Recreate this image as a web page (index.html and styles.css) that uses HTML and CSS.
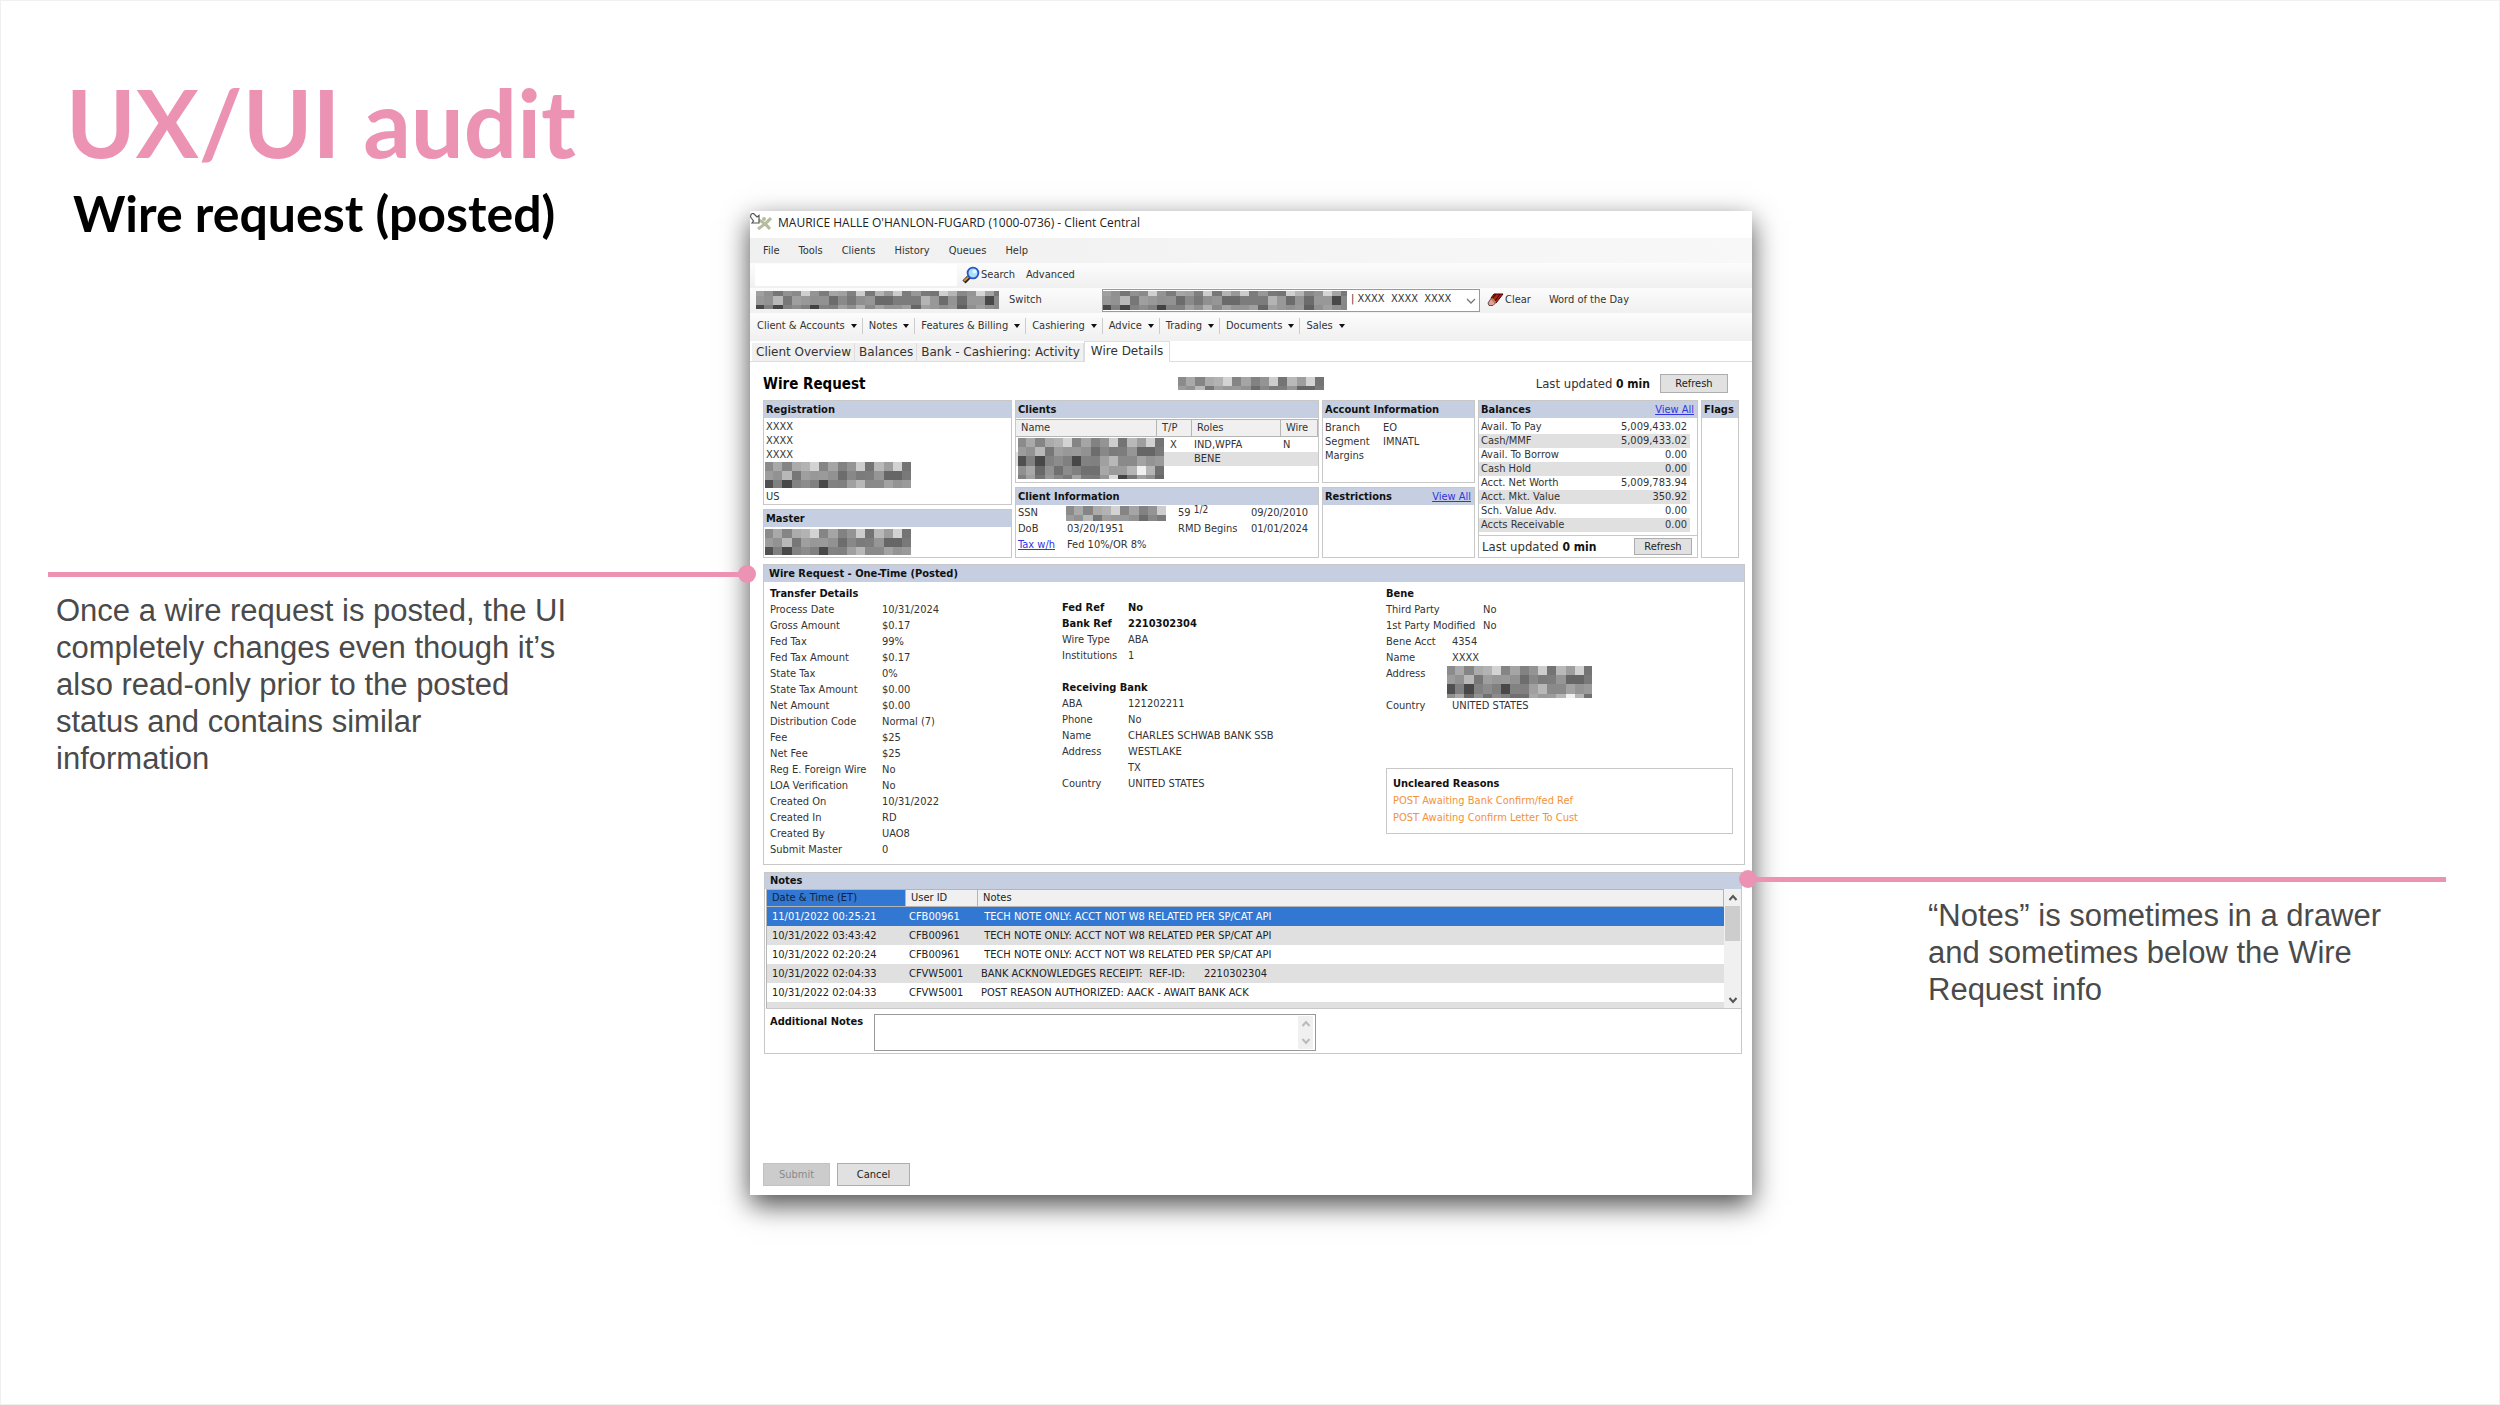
FILE: index.html
```html
<!DOCTYPE html>
<html lang="en">
<head>
<meta charset="utf-8">
<title>UX/UI audit - Wire request (posted)</title>
<link rel="stylesheet" href="styles.css">
</head>
<body>
<main class="slide">
  <section class="side side-left">
    <h1 class="title">UX/UI audit</h1>
    <h2 class="subtitle">Wire request (posted)</h2>
    <div class="callout callout-left">
      <p class="callout-text">Once a wire request is posted, the UI completely changes even though it’s also read-only prior to the posted status and contains similar information</p>
    </div>
  </section>

  <article class="window">
    <header class="titlebar">
      <svg class="app-icon" viewBox="0 0 23 20" width="23" height="20" aria-hidden="true">
        <path d="M21 5Q17 10 8 16M9 7Q15 10 20 16" fill="none" stroke="#b3bd9d" stroke-width="3"/>
        <circle cx="14" cy="6" r="2" fill="#b3bd9d"/>
        <path d="M1 1.500L3 0l4 4 2-1.500V10H2l1.500-2-3-4z" fill="#fff" stroke="#555" stroke-width="1.200"/>
      </svg>
      <span>MAURICE HALLE O'HANLON-FUGARD (1000-0736) - Client Central</span>
    </header>
    <nav class="menu">
      <a href="#">File</a><a href="#">Tools</a><a href="#">Clients</a><a href="#">History</a><a href="#">Queues</a><a href="#">Help</a>
    </nav>
    <div class="bar search-bar">
      <input class="search-input" type="text" aria-label="Search">
      <button class="flat">
        <svg width="18" height="18" viewBox="0 0 18 18" aria-hidden="true">
          <path d="M2 16l5-5" stroke="#222" stroke-width="4.4"/><path d="M2 15l5-4.500" stroke="#d98b3a" stroke-width="2.200"/>
          <circle cx="11" cy="7" r="5.400" fill="#a9e0fb" stroke="#2a52c9" stroke-width="1.800"/><circle cx="12.500" cy="5.500" r="2" fill="#e2f7ff"/>
        </svg>Search</button>
      <button class="flat">Advanced</button>
    </div>
    <div class="bar account-bar">
      <div class="mosaic mosaic-bar" data-rows="bar"></div>
      <button class="flat switch">Switch</button>
      <div class="combo">
        <select aria-label="Account"><option>| XXXX&nbsp; XXXX&nbsp; XXXX</option></select>
        <div class="mosaic combo-mosaic" data-rows="bar"></div>
        <svg class="combo-arrow" width="10" height="6" viewBox="0 0 10 6" aria-hidden="true"><path d="M1 1l4 4 4-4" fill="none" stroke="#777" stroke-width="1.300"/></svg>
      </div>
      <button class="flat clear">
        <svg width="17" height="14" viewBox="0 0 17 14" aria-hidden="true">
          <path d="M7 1h9L9 10 4 5z" fill="#b3201c" stroke="#400" /><path d="M9 1L5 6M13 1L8 8" stroke="#300"/>
          <path d="M5 5l4 4-1 1-4-4z" fill="#f2dc3c"/><path d="M4 5.500l4.500 4.500L6 12.500H2L1 10z" fill="#ef9c94" stroke="#333" stroke-width=".8"/>
        </svg>Clear</button>
      <button class="flat">Word of the Day</button>
    </div>
    <nav class="bar tool-bar">
      <button class="drop">Client &amp; Accounts</button><button class="drop">Notes</button><button class="drop">Features &amp; Billing</button><button class="drop">Cashiering</button><button class="drop">Advice</button><button class="drop">Trading</button><button class="drop">Documents</button><button class="drop">Sales</button>
    </nav>
    <nav class="tabs">
      <a class="tab" href="#">Client Overview</a><a class="tab" href="#">Balances</a><a class="tab" href="#">Bank - Cashiering: Activity</a><a class="tab active" href="#">Wire Details</a>
    </nav>

    <div class="content">
      <div class="page-head">
        <h3 class="page-title">Wire Request</h3>
        <div class="mosaic mosaic-head" data-rows="0,1"></div>
        <span class="updated">Last updated <b>0 min</b></span>
        <button class="btn refresh">Refresh</button>
      </div>

      <div class="summary">
        <div class="stack">
          <section class="panel registration">
            <h4 class="panel-head">Registration</h4>
            <div class="lines"><p>XXXX</p><p>XXXX</p><p>XXXX</p><div class="mosaic mosaic-three" data-rows="0,1,2"></div><p>US</p></div>
          </section>
          <section class="panel grow">
            <h4 class="panel-head">Master</h4>
            <div class="lines tight"><div class="mosaic mosaic-three" data-rows="0,1,2"></div></div>
          </section>
        </div>

        <div class="stack">
          <section class="panel upper">
            <h4 class="panel-head">Clients</h4>
            <div class="clients-wrap">
              <table class="clients">
                <colgroup><col class="c-name"><col class="c-tp"><col class="c-roles"><col></colgroup>
                <thead><tr><th>Name</th><th>T/P</th><th>Roles</th><th>Wire</th></tr></thead>
                <tbody>
                  <tr><td></td><td>X</td><td>IND,WPFA</td><td>N</td></tr>
                  <tr class="alt"><td></td><td></td><td>BENE</td><td></td></tr>
                </tbody>
              </table>
              <div class="mosaic clients-mosaic" data-rows="0,1,2,3,4"></div>
            </div>
          </section>
          <section class="panel grow">
            <h4 class="panel-head">Client Information</h4>
            <div class="info-grid">
              <span>SSN</span><div class="mosaic mosaic-ssn" data-rows="0,1"></div><span>59 <sup>1/2</sup></span><span>09/20/2010</span>
              <span>DoB</span><span>03/20/1951</span><span>RMD Begins</span><span>01/01/2024</span>
              <a class="link" href="#">Tax w/h</a><span>Fed 10%/OR 8%</span>
            </div>
          </section>
        </div>

        <div class="stack">
          <section class="panel upper">
            <h4 class="panel-head">Account Information</h4>
            <dl class="account-info"><dt>Branch</dt><dd>EO</dd><dt>Segment</dt><dd>IMNATL</dd><dt>Margins</dt><dd></dd></dl>
          </section>
          <section class="panel grow">
            <h4 class="panel-head">Restrictions <a class="link" href="#">View All</a></h4>
          </section>
        </div>

        <section class="panel">
          <h4 class="panel-head">Balances <a class="link" href="#">View All</a></h4>
          <table class="balances">
            <tr><th>Avail. To Pay</th><td>5,009,433.02</td></tr>
            <tr><th>Cash/MMF</th><td>5,009,433.02</td></tr>
            <tr><th>Avail. To Borrow</th><td>0.00</td></tr>
            <tr><th>Cash Hold</th><td>0.00</td></tr>
            <tr><th>Acct. Net Worth</th><td>5,009,783.94</td></tr>
            <tr><th>Acct. Mkt. Value</th><td>350.92</td></tr>
            <tr><th>Sch. Value Adv.</th><td>0.00</td></tr>
            <tr><th>Accts Receivable</th><td>0.00</td></tr>
          </table>
          <div class="balances-foot"><span class="updated">Last updated <b>0 min</b></span><button class="btn refresh-small">Refresh</button></div>
        </section>

        <section class="panel flags"><h4 class="panel-head">Flags</h4></section>
      </div>

      <section class="panel wire">
        <h4 class="panel-head">Wire Request - One-Time (Posted)</h4>
        <div class="wire-body">
          <div class="details">
            <h5>Transfer Details</h5>
            <dl>
              <dt>Process Date</dt><dd>10/31/2024</dd><dt>Gross Amount</dt><dd>$0.17</dd>
              <dt>Fed Tax</dt><dd>99%</dd><dt>Fed Tax Amount</dt><dd>$0.17</dd>
              <dt>State Tax</dt><dd>0%</dd><dt>State Tax Amount</dt><dd>$0.00</dd>
              <dt>Net Amount</dt><dd>$0.00</dd><dt>Distribution Code</dt><dd>Normal (7)</dd>
              <dt>Fee</dt><dd>$25</dd><dt>Net Fee</dt><dd>$25</dd>
              <dt>Reg E. Foreign Wire</dt><dd>No</dd><dt>LOA Verification</dt><dd>No</dd>
              <dt>Created On</dt><dd>10/31/2022</dd><dt>Created In</dt><dd>RD</dd>
              <dt>Created By</dt><dd>UAO8</dd><dt>Submit Master</dt><dd>0</dd>
            </dl>
          </div>
          <div class="details bank">
            <dl>
              <dt class="strong">Fed Ref</dt><dd class="strong">No</dd><dt class="strong">Bank Ref</dt><dd class="strong">2210302304</dd>
              <dt>Wire Type</dt><dd>ABA</dd><dt>Institutions</dt><dd>1</dd>
            </dl>
            <h5 class="receiving">Receiving Bank</h5>
            <dl>
              <dt>ABA</dt><dd>121202211</dd><dt>Phone</dt><dd>No</dd><dt>Name</dt><dd>CHARLES SCHWAB BANK SSB</dd>
              <dt>Address</dt><dd>WESTLAKE</dd><dt></dt><dd>TX</dd><dt>Country</dt><dd>UNITED STATES</dd>
            </dl>
          </div>
          <div class="details bene">
            <h5>Bene</h5>
            <dl class="party"><dt>Third Party</dt><dd>No</dd><dt>1st Party Modified</dt><dd>No</dd></dl>
            <dl>
              <dt>Bene Acct</dt><dd>4354</dd><dt>Name</dt><dd>XXXX</dd>
              <dt class="address">Address</dt><dd class="address"><div class="mosaic mosaic-address" data-rows="0,1,2,3"></div></dd>
              <dt>Country</dt><dd>UNITED STATES</dd>
            </dl>
            <div class="uncleared"><h5>Uncleared Reasons</h5><p>POST Awaiting Bank Confirm/fed Ref</p><p>POST Awaiting Confirm Letter To Cust</p></div>
          </div>
        </div>
      </section>

      <section class="panel notes">
        <h4 class="panel-head">Notes</h4>
        <div class="notes-list">
          <div class="notes-view">
            <table class="notes-table">
              <colgroup><col class="n-date"><col class="n-user"><col></colgroup>
              <thead><tr><th class="sorted">Date &amp; Time (ET)</th><th>User ID</th><th>Notes</th></tr></thead>
              <tbody>
                <tr class="selected"><td>11/01/2022 00:25:21</td><td>CFB00961</td><td>&nbsp;TECH NOTE ONLY: ACCT NOT W8 RELATED PER SP/CAT API</td></tr>
                <tr class="alt"><td>10/31/2022 03:43:42</td><td>CFB00961</td><td>&nbsp;TECH NOTE ONLY: ACCT NOT W8 RELATED PER SP/CAT API</td></tr>
                <tr><td>10/31/2022 02:20:24</td><td>CFB00961</td><td>&nbsp;TECH NOTE ONLY: ACCT NOT W8 RELATED PER SP/CAT API</td></tr>
                <tr class="alt"><td>10/31/2022 02:04:33</td><td>CFVW5001</td><td>BANK ACKNOWLEDGES RECEIPT:&nbsp; REF-ID: &nbsp; &nbsp; &nbsp;2210302304</td></tr>
                <tr><td>10/31/2022 02:04:33</td><td>CFVW5001</td><td>POST REASON AUTHORIZED: AACK - AWAIT BANK ACK</td></tr>
                <tr class="alt next"><td colspan="3"></td></tr>
              </tbody>
            </table>
          </div>
          <div class="scroll">
            <svg class="chev" viewBox="0 0 10 10"><path d="M1.500 7L5 3l3.500 4"/></svg>
            <div class="thumb"></div>
            <svg class="chev chev-down" viewBox="0 0 10 10"><path d="M1.500 3L5 7l3.500-4"/></svg>
          </div>
        </div>
        <div class="additional">
          <label for="extra">Additional Notes</label>
          <div class="area">
            <textarea id="extra"></textarea>
            <div class="area-scroll">
              <svg class="chev" viewBox="0 0 10 10"><path d="M1.500 7L5 3l3.500 4"/></svg>
              <svg class="chev" viewBox="0 0 10 10"><path d="M1.500 3L5 7l3.500-4"/></svg>
            </div>
          </div>
        </div>
      </section>

      <footer class="actions"><button class="btn submit" disabled>Submit</button><button class="btn cancel">Cancel</button></footer>
    </div>
  </article>

  <section class="side side-right">
    <div class="callout callout-right">
      <p class="callout-text">“Notes” is sometimes in a drawer and sometimes below the Wire Request info</p>
    </div>
  </section>
</main>
<script src="mosaic.js"></script>
</body>
</html>
```
FILE: styles.css
```css
* { box-sizing: border-box; }
body, h1, h2, h3, h4, h5, p, dl, dd { margin: 0; }
body {
  background: #fff;
  font-family: "DejaVu Sans Condensed", "DejaVu Sans", sans-serif;
  font-size: 11px;
  line-height: 16px;
  color: #333;
}
a { color: inherit; text-decoration: none; }
button, input, select, textarea { font: inherit; color: inherit; margin: 0; border-radius: 0; }
svg { display: block; flex: none; }
b, .strong { font-weight: bold; color: #111; }

/* Slide */
.slide {
  display: grid;
  grid-template-columns: 30% minmax(0, 40.08%) 1fr;
  align-items: start;
  min-height: 100vh;
  box-shadow: inset 0 0 0 1px #f0f0f0;
}
.side { position: relative; z-index: 1; }
.side-left { padding: 66px 0 0 48px; }
.title {
  padding-left: 18px;
  font: bold 94px/112px Lato, sans-serif;
  color: #ec93b4;
}
.subtitle {
  padding-left: 25px;
  font: bold 50px/70px Lato, sans-serif;
  color: #000;
}
.callout { position: relative; border-top: 5px solid #ec93b4; }
.callout::after {
  content: "";
  position: absolute;
  top: -12px;
  width: 18px;
  height: 18px;
  border-radius: 50%;
  background: #ec93b4;
}
.callout-left { margin-top: 324px; padding: 15px 140px 0 8px; }
.callout-left::after { right: -6px; }
.callout-right { margin: 877px 54px 0 0; padding: 15px 60px 0 176px; }
.callout-right::after { left: -13px; }
.callout-text {
  font: 31px/37px "Liberation Sans", Arial, sans-serif;
  color: #4a4a4a;
  max-width: 520px;
}
.callout-right .callout-text { max-width: 470px; }

/* Application window */
.window {
  margin: 211px 0 60px;
  background: #fff;
  box-shadow: 0 10px 26px rgba(0, 0, 0, .7);
}
.titlebar {
  display: flex;
  align-items: center;
  gap: 5px;
  height: 27px;
  padding-bottom: 3px;
  font: 12px/20px "Open Sans", "Noto Sans", sans-serif;
  color: #222;
}
.menu {
  display: flex;
  align-items: center;
  gap: 19px;
  height: 25px;
  padding-left: 13px;
  background: linear-gradient(90deg, #f0f0f0, #f8f8f8);
}
.bar { display: flex; align-items: center; background: linear-gradient(#fcfcfc, #f0f0f0); }
.flat, .drop {
  display: flex;
  align-items: center;
  padding: 0;
  border: 0;
  background: none;
  white-space: nowrap;
}
.search-bar { height: 25px; padding: 0 0 1px 5px; gap: 11px; }
.search-bar .flat { gap: 1px; }
.search-input { width: 202px; height: 22px; border: 0; background: #fff; margin-right: -6px; }
.account-bar { height: 25px; padding: 0 0 1px 6px; }
.mosaic { overflow: hidden; background: #8c8c8c; }
.mosaic-bar { width: 243px; height: 18px; }
.switch { width: 93px; margin-left: 10px; }
.combo { position: relative; width: 378px; height: 23px; }
.combo select {
  width: 100%;
  height: 100%;
  padding: 0 0 2px 248px;
  border: 1px solid #9a9a9a;
  background: #fff;
  appearance: none;
}
.combo-mosaic { position: absolute; left: 1px; top: 2px; width: 244px; height: 19px; }
.combo-arrow { position: absolute; right: 4px; top: 9px; }
.clear { gap: 1px; margin: 0 18px 0 7px; }

.tool-bar { height: 28px; padding: 0 0 2px 7px; }
.drop::after {
  content: "";
  margin: 0 5px 0 6px;
  border: 3px solid transparent;
  border-top: 4px solid #111;
  border-bottom: 0;
}
.drop + .drop { border-left: 1px solid #ccc; padding-left: 6px; }
.tabs {
  display: flex;
  align-items: flex-end;
  height: 21px;
  padding-left: 2px;
  border-bottom: 1px solid #ddd;
  font-family: "DejaVu Sans", sans-serif;
  font-size: 12px;
}
.tab { height: 18px; padding: 0 3px 0 4px; line-height: 18px; background: #f0f0f0; border-right: 1px solid #ddd; white-space: nowrap; }
.tab.active { height: 21px; padding: 0 6px; margin-bottom: -1px; line-height: 19px; background: #fff; border: 1px solid #ddd; border-bottom: 0; }

/* Page content */
.content { padding: 10px 7px 9px 13px; }
.page-head { display: flex; align-items: center; height: 23px; padding-right: 17px; margin-bottom: 5px; }
.page-title { width: 415px; font-size: 15px; color: #000; }
.mosaic-head { width: 146px; height: 13px; }
.updated { font-size: 13px; white-space: nowrap; }
.page-head .updated { margin-left: auto; }
.btn { padding: 0; border: 1px solid #adadad; background: #e1e1e1; color: #222; }
.refresh { width: 68px; height: 19px; margin-left: 10px; line-height: 16px; }
.refresh-small { width: 58px; height: 17px; line-height: 14px; }

.summary {
  display: grid;
  grid-template-columns: 249fr 304fr 153fr 220fr 38fr;
  gap: 3px;
  padding-right: 6px;
  min-height: 158px;
}
.stack { display: flex; flex-direction: column; gap: 4px; }
.panel { border: 1px solid #c8c8c8; background: #fff; }
.grow { flex: 1; }
.upper { height: 83px; }
.registration { height: 105px; }
.panel-head {
  display: flex;
  justify-content: space-between;
  height: 17px;
  padding: 0 3px 0 2px;
  background: #c5cfe1;
  font-size: 11px;
  line-height: 17px;
  color: #111;
  white-space: nowrap;
}
.link { color: #3333e0; font-weight: normal; text-decoration: underline; }
.lines { padding: 2px 2px 0; line-height: 14px; }
.mosaic-three { width: 146px; height: 26px; margin: 0 0 2px -1px; }

.clients-wrap { position: relative; padding: 1px 0 0; }
.clients { width: 100%; table-layout: fixed; border-collapse: separate; border-spacing: 0; line-height: 14px; }
.c-name { width: 141px; }
.c-tp { width: 35px; }
.c-roles { width: 89px; }
th { font-weight: normal; text-align: left; }
.clients th { height: 18px; padding: 0 0 0 5px; background: #f0f0f0; border: solid #b5b5b5; border-width: 1px 1px 1px 0; }
.clients tbody tr:first-child td { height: 15px; }
.clients td { height: 14px; padding: 0 0 0 2px; }
.clients td:nth-child(2) { padding-left: 13px; }
.clients td:first-child { padding-left: 145px; }
.alt { background: #e0e0e0; }
.clients-mosaic { position: absolute; left: 2px; top: 20px; width: 146px; height: 41px; }

.info-grid {
  display: grid;
  grid-template-columns: 49px 111px 73px 1fr;
  padding: 0 2px;
  white-space: nowrap;
}
.info-grid > span { height: 16px; }
.info-grid sup { font-size: 10px; line-height: 0; vertical-align: 3px; }
.mosaic-ssn { width: 100px; height: 15px; margin: 1px 0 0 -1px; }
.account-info { display: grid; grid-template-columns: 58px 1fr; grid-auto-rows: 14px; padding: 3px 2px; line-height: 14px; }
.balances { width: calc(100% - 7px); margin-top: 2px; border-collapse: collapse; line-height: 14px; }
.balances th, .balances td { padding: 0 3px 0 2px; }
.balances td { text-align: right; }
.balances tr:nth-child(even) { background: #e0e0e0; }
.balances-foot { display: flex; align-items: center; justify-content: space-between; height: 22px; margin-top: 3px; padding: 0 5px 0 3px; border-top: 1px solid #c8c8c8; }
.updated b { font-size: 12px; }

/* Wire details */
.wire { margin-top: 6px; }
.wire .panel-head, .notes .panel-head { padding-left: 5px; }
.wire-body {
  display: grid;
  grid-template-columns: 292px 324px 1fr;
  min-height: 282px;
  padding: 4px 11px 3px 6px;
}
.details h5, .uncleared h5 { font-size: 11px; line-height: 16px; color: #111; }
.details dl { display: grid; grid-template-columns: 112px 1fr; grid-auto-rows: 16px; white-space: nowrap; }
.bank { padding-top: 14px; }
.details.bank dl, .details.bene dl { grid-template-columns: 66px 1fr; }
.details.bene dl.party { grid-template-columns: 97px 1fr; }
.receiving { margin-top: 16px; }
.address { grid-row: span 2; }
.mosaic-address { width: 145px; height: 32px; margin-left: -5px; }
.uncleared { margin-top: 54px; padding: 7px 6px 7px; min-height: 66px; border: 1px solid #c8c8c8; }
.uncleared p { color: #f2923a; line-height: 17px; }

/* Notes */
.notes { margin: 7px 3px 0 1px; }
.notes .panel-head { height: 16px; line-height: 16px; }
.notes-list { display: flex; margin-left: 1px; border-bottom: 1px solid #c8c8c8; }
.notes-view { flex: 1; height: 119px; overflow: hidden; border-left: 1px solid #b5b5b5; }
.notes-table { width: 100%; table-layout: fixed; border-collapse: separate; border-spacing: 0; color: #222; }
.n-date { width: 139px; }
.n-user { width: 72px; }
.notes-table th { height: 18px; padding: 0 5px; background: #f0f0f0; border: solid #b5b5b5; border-width: 1px 1px 1px 0; line-height: 16px; }
.notes-table th.sorted { background: #3277d2; color: #10233d; }
.notes-table td { height: 19px; padding: 0 3px; line-height: 19px; white-space: nowrap; }
.notes-table td:first-child { padding-left: 5px; }
.selected { background: #3277d2; color: #fff; }
.scroll { display: flex; flex-direction: column; align-items: center; width: 17px; background: #f0f0f0; }
.chev { width: 10px; height: 10px; fill: none; stroke: #555; stroke-width: 2; }
.scroll .chev { margin: 4px 0 3px; }
.scroll .chev-down { margin-top: auto; }
.thumb { width: 15px; height: 35px; background: #cdcdcd; }
.additional { display: flex; padding: 5px 0 2px 5px; }
.additional label { width: 104px; font-weight: bold; color: #111; }
.area { position: relative; width: 442px; height: 37px; }
.area textarea { display: block; width: 100%; height: 100%; border: 1px solid #999; resize: none; background: #fff; }
.area-scroll { position: absolute; right: 3px; top: 2px; bottom: 2px; width: 15px; display: flex; flex-direction: column; justify-content: space-around; align-items: center; background: #f0f0f0; }
.area-scroll .chev { stroke: #bbb; }
.actions { display: flex; gap: 7px; margin-top: 109px; }
.actions .btn { width: 73px; height: 23px; }
.actions .submit { width: 67px; background: #ccc; border-color: #c2c2c2; color: #8a8a8a; }
```
FILE: mosaic.js
```javascript
// Fills each redacted area with a block of grey cells.
const SHADES = [
  "8b a9 85 ab b3 d3 85 a5 82 94 cd 74 b9 9e d2 74",
  "9c 92 b8 77 9f 98 9a 92 6d 88 7b 7d 96 66 66 79",
  "50 80 48 82 8c 80 48 82 80 a0 b8 8a 8a a3 94 9a",
  "90 a8 68 92 70 8c 80 70 70 a8 9a 9c b5 f0 b5 70",
  "80 a0 74 98 86 7a a4 7c 7a 96 d8 44 76 a0 90 68"
].map(row => row.split(" "));
const BAR = [
  "a0 90 76 92 8a cf 94 7c a5 a0 80 cc 78 b4 98 cc 7c 98 78 74 cf b5 88 94 d4 a4 78",
  "98 92 b8 77 9f 98 90 92 6c 8a 78 90 96 6a 6a 7c 7c 7c b4 98 6c 94 6c 98 98 48 88",
  "48 80 46 82 8c 80 42 82 80 a0 90 b0 8a a3 94 94 a0 66 a0 98 90 98 60 90 a0 90 88"
].map(row => row.split(" "));
const CELL = 9.2;

document.querySelectorAll(".mosaic").forEach(box => {
  const isBar = box.dataset.rows === "bar";
  const rows = isBar ? BAR : box.dataset.rows.split(",").map(i => SHADES[i]);
  const top = isBar ? 4 : 0;
  const cells = rows.map((row, y) => row.map((shade, x) =>
    `<rect x="${x * CELL - 1}" y="${y * CELL - top}" width="9.600" height="9.600" fill="#${shade.repeat(3)}"/>`
  ).join("")).join("");
  box.innerHTML = `<svg width="100%" height="100%" shape-rendering="crispEdges" aria-hidden="true">${cells}</svg>`;
});
```
